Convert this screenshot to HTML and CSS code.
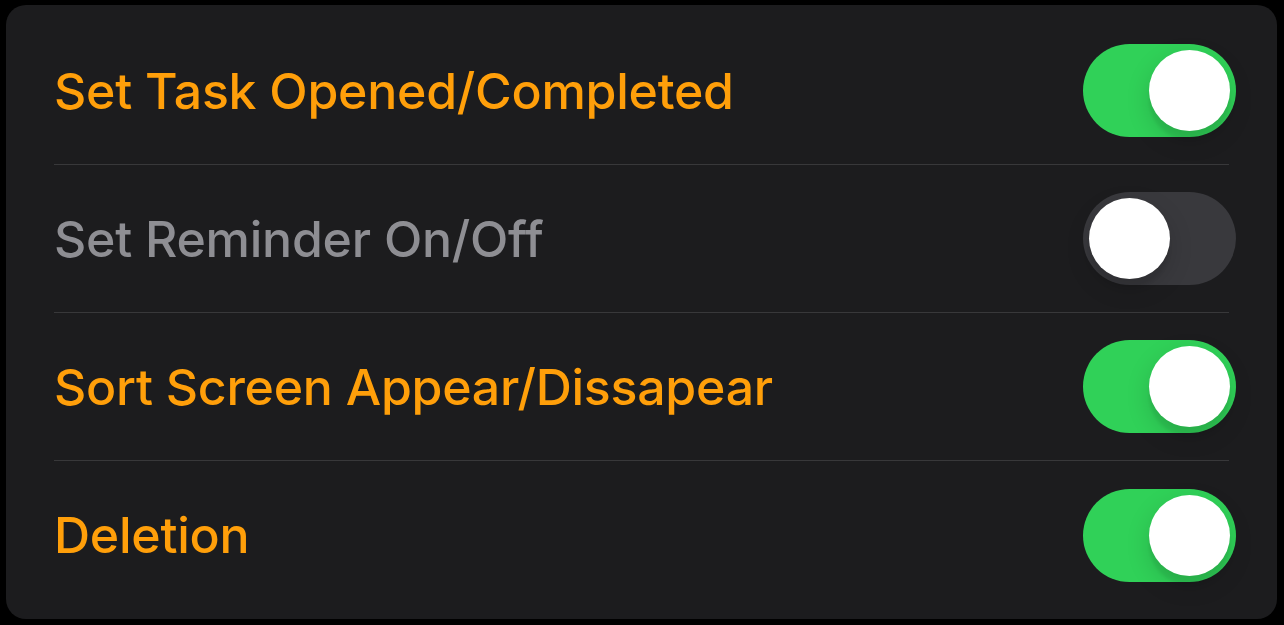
FILE: index.html
```html
<!DOCTYPE html>
<html lang="en">
<head>
<meta charset="utf-8">
<title>Settings</title>
<link rel="stylesheet" href="styles.css">
</head>
<body>
<div class="card">
  <div class="row">
    <span class="label">Set Task Opened/Completed</span>
    <span class="toggle on"><span class="knob"></span></span>
  </div>
  <div class="row">
    <span class="label off">Set Reminder On/Off</span>
    <span class="toggle"><span class="knob"></span></span>
  </div>
  <div class="row">
    <span class="label">Sort Screen Appear/Dissapear</span>
    <span class="toggle on"><span class="knob"></span></span>
  </div>
  <div class="row">
    <span class="label">Deletion</span>
    <span class="toggle on"><span class="knob"></span></span>
  </div>
</div>
</body>
</html>
```
FILE: styles.css
```css
html, body {
  margin: 0;
  padding: 0;
  background: #000;
}
body {
  padding: 5px 7px 6px 6px;
  font-family: Inter, "Noto Sans", sans-serif;
}
.card {
  background: #1c1c1e;
  border-radius: 20px;
  height: 614px;
  box-sizing: border-box;
  padding: 12px 0 10px;
  display: flex;
  flex-direction: column;
}
.row {
  height: 148px;
  flex: none;
  display: flex;
  align-items: center;
  justify-content: space-between;
  margin: 0 48px;
  border-bottom: 1px solid #38383a;
  box-sizing: border-box;
}
.row:last-child {
  border-bottom: none;
}
.label {
  color: #ff9f0a;
  font-size: 50px;
  font-weight: 500;
  letter-spacing: -0.25px;
}
.label.off {
  color: #8e8e93;
}
.toggle {
  width: 153px;
  height: 93px;
  border-radius: 47px;
  background: #39393d;
  display: flex;
  align-items: center;
  padding: 0 6px;
  box-sizing: border-box;
  margin-right: -7px;
  justify-content: flex-start;
}
.toggle.on {
  background: #30d158;
  justify-content: flex-end;
}
.knob {
  width: 81px;
  height: 81px;
  border-radius: 50%;
  background: #fff;
  box-shadow: 0 9px 24px rgba(0,0,0,0.15), 0 9px 3px rgba(0,0,0,0.06);
}
```
